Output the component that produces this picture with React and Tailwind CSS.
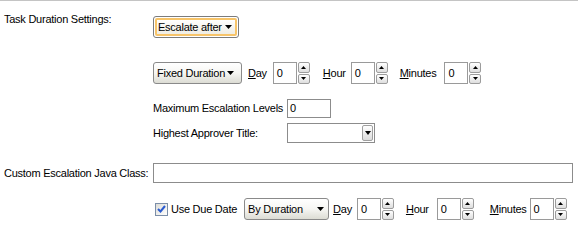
import React from 'react';

const font = { fontFamily: '"Liberation Sans", Arial, sans-serif' };

const Arrow = () => (
    <svg width="7" height="4" viewBox="0 0 7 4" className="shrink-0">
        <path d="M0 0h7L3.5 4z" fill="#000" />
    </svg>
);

const SmallArrow = ({ up }) => (
    <svg width="5" height="3" viewBox="0 0 5 3">
        <path d={up ? 'M0 3h5L2.5 0z' : 'M0 0h5L2.5 3z'} fill="#000" />
    </svg>
);

const Dropdown = ({ label, width, spread }) => (
    <div
        className={`h-[22px] ${width} flex items-center ${spread ? 'justify-between' : 'gap-[2px]'} pl-[3px] pr-[4px] rounded-[3px] border border-[#8a8a8a] bg-gradient-to-b from-white via-[#f6f6f3] to-[#dcdcd4] text-black`}
    >
        <span className="whitespace-nowrap">{label}</span>
        <Arrow />
    </div>
);

const Spin = ({ value = '0' }) => (
    <div className="h-[22px] flex">
        <div className="w-[24px] h-full border border-[#9a9a9a] bg-white pl-[3px] flex items-center">{value}</div>
        <div className="w-[12px] h-full flex flex-col gap-[1px] ml-[1px]">
            <div className="flex-1 rounded-[2px] border border-[#9c9c9c] bg-gradient-to-b from-white to-[#dedede] flex items-center justify-center">
                <SmallArrow up />
            </div>
            <div className="flex-1 rounded-[2px] border border-[#9c9c9c] bg-gradient-to-b from-white to-[#dedede] flex items-center justify-center">
                <SmallArrow />
            </div>
        </div>
    </div>
);

const U = ({ children, rest }) => (
    <span className="whitespace-nowrap">
        <span className="underline underline-offset-1">{children}</span>
        {rest}
    </span>
);

export default function App() {
    return (
        <div
            className="w-[578px] h-[231px] bg-white border-t border-[#c4c4c4] text-[11px] tracking-[-0.25px] text-black overflow-hidden"
            style={font}
        >
            {/* Task duration */}
            <div className="flex mt-[11px]">
                <div className="w-[153px] pl-[4px] leading-[14px]">Task Duration Settings:</div>
                <div className="mt-[4px] h-[22px] w-[86px] rounded-[3px] border border-[#7c7c7c] p-[1px]">
                    <div className="h-full w-full rounded-[2px] border-2 border-[#f7c469] bg-gradient-to-b from-white to-[#efede4] flex items-center justify-between pl-[1px] pr-[3px]">
                        <span className="whitespace-nowrap">Escalate after</span>
                        <Arrow />
                    </div>
                </div>
            </div>

            <div className="flex items-center ml-[153px] mt-[24px]">
                <Dropdown label="Fixed Duration" width="w-[89px]" />
                <span className="ml-[6px] mr-[6px]"><U rest="ay">D</U></span>
                <Spin />
                <span className="ml-[13px] mr-[5px]"><U rest="our">H</U></span>
                <Spin />
                <span className="ml-[12px] mr-[8px]"><U rest="inutes">M</U></span>
                <Spin />
            </div>

            <div className="flex items-center ml-[153px] mt-[15px] h-[19px]">
                <span className="w-[134px] whitespace-nowrap">Maximum Escalation Levels</span>
                <div className="w-[44px] h-[19px] border border-[#8c8c8c] bg-white pl-[2px] flex items-center">0</div>
            </div>

            <div className="flex items-center ml-[153px] mt-[5px] h-[20px]">
                <span className="w-[134px] whitespace-nowrap">Highest Approver Title:</span>
                <div className="w-[88px] h-[20px] border border-[#8c8c8c] bg-white flex justify-end p-[1px]">
                    <div className="w-[11px] h-full rounded-[2px] border border-[#a0a0a0] bg-gradient-to-b from-white to-[#dcdcdc] flex items-center justify-center">
                        <svg width="6" height="4" viewBox="0 0 6 4"><path d="M0 0h6L3 4z" fill="#000" /></svg>
                    </div>
                </div>
            </div>

            <div className="flex items-center mt-[20px] h-[20px] pr-[5px]">
                <span className="w-[153px] pl-[4px] whitespace-nowrap">Custom Escalation Java Class:</span>
                <div className="flex-1 h-[20px] border border-[#8c8c8c] bg-white" />
            </div>

            <div className="flex items-center ml-[155px] mt-[15px]">
                <div className="w-[13px] h-[13px] border border-[#7b8ea8] bg-gradient-to-br from-[#dcdcd7] to-white flex items-center justify-center">
                    <svg width="9" height="8" viewBox="0 0 9 8">
                        <path d="M1 4l2.5 2.5L8 1" stroke="#2a5bd0" strokeWidth="2" fill="none" />
                    </svg>
                </div>
                <span className="ml-[3px] whitespace-nowrap">Use Due Date</span>
                <div className="ml-[7px]">
                    <Dropdown label="By Duration" width="w-[85px]" spread />
                </div>
                <span className="ml-[4px] mr-[5px]"><U rest="ay">D</U></span>
                <Spin />
                <span className="ml-[12px] mr-[8px]"><U rest="our">H</U></span>
                <Spin />
                <span className="ml-[16px] mr-[3px]"><U rest="inutes">M</U></span>
                <Spin />
            </div>
        </div>
    );
}
